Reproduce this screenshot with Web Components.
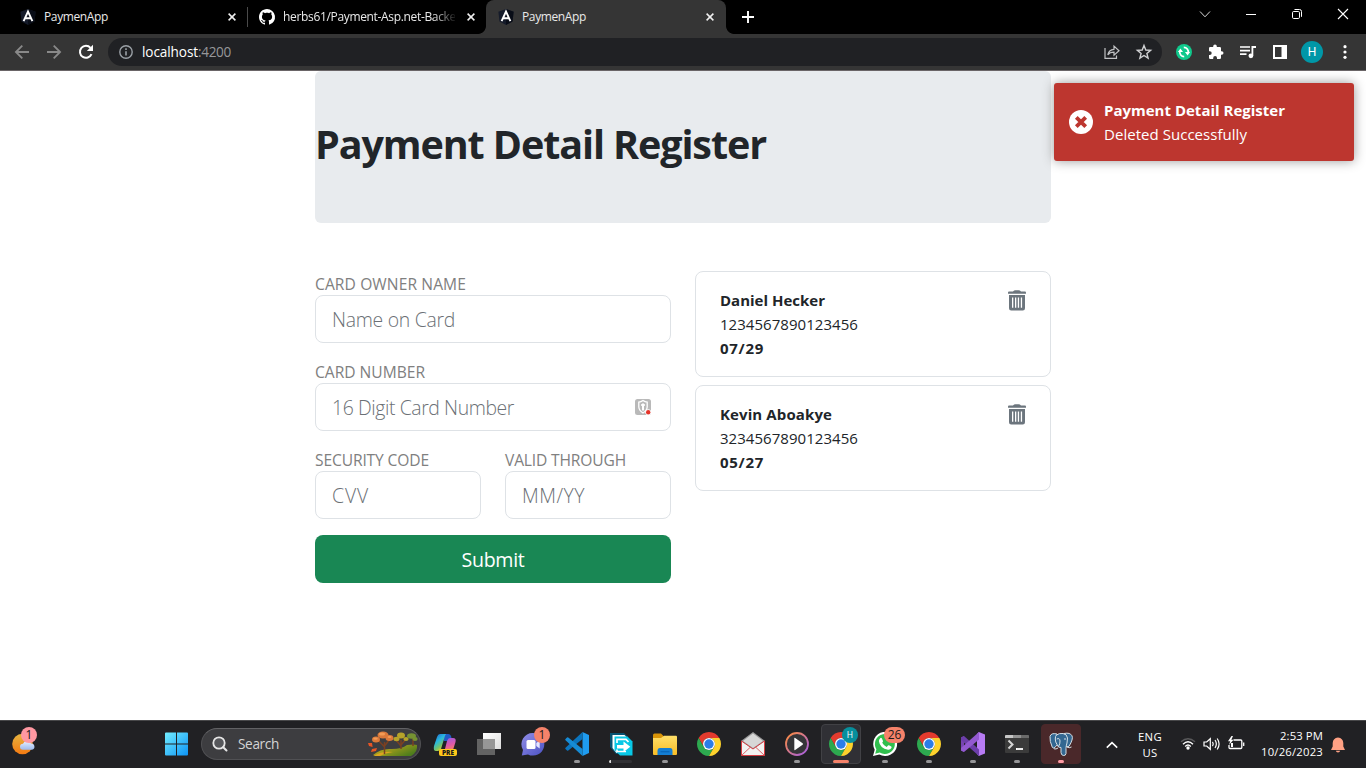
<!DOCTYPE html>
<html lang="en">
<head>
<meta charset="utf-8">
<title>PaymenApp</title>
<style>
html,body{margin:0;height:100%;overflow:hidden}
body{font-family:"Open Sans","Noto Sans",sans-serif;background:#fff;color:#212529}
</style>
</head>
<body>
<desktop-screen></desktop-screen>
<script>
const define=(name,html,setup)=>{
  const t=document.createElement('template');t.innerHTML=html;
  customElements.define(name,class extends HTMLElement{
    constructor(){super();this.attachShadow({mode:'open'}).append(t.content.cloneNode(true));}
    connectedCallback(){if(setup)setup(this,this.shadowRoot);}
  });
};

const chrome=`<path fill="#e33b2e" d="M12 6H22.39A12 12 0 0 0 1.61 6L6.8 15A6 6 0 0 1 12 6Z"/><path fill="#2da94f" d="M6.8 15L1.61 6A12 12 0 0 0 12 24L17.2 15A6 6 0 0 1 6.8 15Z"/><path fill="#fdd22c" d="M17.2 15L12 24A12 12 0 0 0 22.39 6H12A6 6 0 0 1 17.2 15Z"/><circle cx="12" cy="12" r="6" fill="#fff"/><circle cx="12" cy="12" r="4.7" fill="#2a7de9"/>`;
const icons={
angular:[16,16,`<path fill="#151b2a" d="M8 0L15.6 2.7 14.5 12.5 8 16 1.5 12.5 .4 2.7Z"/><path fill="#090d17" d="M8 0L15.6 2.7 14.5 12.5 8 16Z"/><path fill="none" stroke="#fff" stroke-width="1.9" d="M3.6 12.1L8 2.6 12.4 12.1M5.4 9.2H10.6"/>`],
github:[16,16,`<path fill="#fff" d="M8 0C3.58 0 0 3.58 0 8c0 3.54 2.29 6.53 5.47 7.59.4.07.55-.17.55-.38 0-.19-.01-.82-.01-1.49-2.01.37-2.53-.49-2.69-.94-.09-.23-.48-.94-.82-1.13-.28-.15-.68-.52-.01-.53.63-.01 1.08.58 1.23.82.72 1.21 1.87.87 2.33.66.07-.52.28-.87.51-1.07-1.78-.2-3.64-.89-3.64-3.95 0-.87.31-1.59.82-2.15-.08-.2-.36-1.02.08-2.12 0 0 .67-.21 2.2.82.64-.18 1.32-.27 2-.27s1.36.09 2 .27c1.53-1.04 2.2-.82 2.2-.82.44 1.1.16 1.92.08 2.12.51.56.82 1.27.82 2.15 0 3.07-1.87 3.75-3.65 3.95.29.25.54.73.54 1.48 0 1.07-.01 1.93-.01 2.2 0 .21.15.46.55.38A8 8 0 0 0 8 0Z"/>`],
close:[8,8,`<path stroke="#f0f0f0" stroke-width="1.5" d="M.6.6L7.4 7.4M7.4.6L.6 7.4"/>`],
plus:[12,12,`<path stroke="#fff" stroke-width="1.9" d="M6 0V12M0 6H12"/>`],
wchev:[12,12,`<path fill="none" stroke="#d8d8d8" d="M1 3.5L6 8.8 11 3.5"/>`],
wmin:[12,12,`<path stroke="#fff" d="M1 6.5H11"/>`],
wrest:[12,12,`<rect x="1.5" y="3.5" width="7" height="7" rx="1.2" fill="none" stroke="#fff"/><path fill="none" stroke="#fff" d="M3.5 1.5H8.5Q10.5 1.5 10.5 3.5V8.8"/>`],
wclose:[12,12,`<path stroke="#fff" stroke-width="1.1" d="M1 1L11 11M11 1L1 11"/>`],
back:[16,16,`<path fill="none" stroke="#898989" stroke-width="1.8" d="M15 8H2M8.3 1.6L1.9 8 8.3 14.4"/>`],
fwd:[16,16,`<path fill="none" stroke="#898989" stroke-width="1.8" d="M1 8H14M7.7 1.6L14.1 8 7.7 14.4"/>`],
reload:[16,16,`<path fill="none" stroke="#fff" stroke-width="2" d="M13.5 10.2A6 6 0 1 1 12.5 3.9"/><path fill="#fff" d="M15 .8V7H8.8Z"/>`],
info:[14,14,`<circle cx="7" cy="7" r="6.2" fill="none" stroke="#9aa0a6" stroke-width="1.4"/><path stroke="#9aa0a6" stroke-width="1.6" d="M7 6.2V10.5M7 3.3V5"/>`],
share:[16,16,`<path fill="none" stroke="#c2c3c5" stroke-width="1.2" d="M1 4V14.4H12.5V11.5M3.8 10.8C4.5 7 6.8 5.6 10 5.3V2.1L15 6.8 10 11.1V8.2C7.5 8.2 5.3 8.8 3.8 10.8Z"/>`],
star:[16,16,`<path fill="none" stroke="#d0d1d3" stroke-width="1.4" d="M8 1.5L9.8 6 14.6 6.3 10.9 9.4 12.1 14.1 8 11.5 3.9 14.1 5.1 9.4 1.4 6.3 6.2 6Z"/>`],
sync:[16,16,`<circle cx="8" cy="8" r="8" fill="#10c98c"/><path fill="none" stroke="#fff" stroke-width="1.7" d="M8.2 12.6A4.5 4.5 0 0 1 3.8 7.2M7.8 3.4A4.5 4.5 0 0 1 12.2 8.8"/><path fill="#fff" d="M1.9 8L4.4 4.4 7 8ZM14.1 8L11.6 11.6 9 8Z"/>`],
puzzle:[16,16,`<path fill="#fff" d="M1 4.2Q1 3 2.2 3H5.2V2.2A1.8 1.8 0 0 1 8.8 2.2V3H11.8Q13 3 13 4.2V7.2H13.7A1.8 1.8 0 0 1 13.7 10.8H13V13.8Q13 15 11.8 15H9V14A1.9 1.9 0 0 0 5.2 14V15H2.2Q1 15 1 13.8V11H1.8A1.9 1.9 0 0 0 1.8 7.2H1Z"/>`],
queue:[16,16,`<path stroke="#fff" stroke-width="1.7" d="M0 3H10M0 6.6H10M0 10.2H6.5"/><path fill="none" stroke="#fff" stroke-width="1.8" d="M12.4 11.5V3H16"/><circle cx="10.9" cy="11.8" r="2.4" fill="#fff"/>`],
panel:[14,14,`<path fill="#fff" fill-rule="evenodd" d="M0 0H14V14H0ZM2 2V12H8.5V2Z"/>`],
dots:[4,14,`<g fill="#fff"><circle cx="2" cy="1.7" r="1.6"/><circle cx="2" cy="7" r="1.6"/><circle cx="2" cy="12.3" r="1.6"/></g>`],
trash:[18,21,`<path fill="#6c757d" fill-rule="evenodd" d="M1 1.6H5Q6 .2 7.4.2H10.6Q12 .2 13 1.6H17Q18 1.6 18 2.8V3.8H0V2.8Q0 1.6 1 1.6ZM1 5H17V18.3Q17 20.6 14.8 20.6H3.2Q1 20.6 1 18.3ZM4 7.6V17.8H5.3V7.6ZM7 7.6V17.8H8.3V7.6ZM9.8 7.6V17.8H11.1V7.6ZM12.8 7.6V17.8H14.1V7.6Z"/>`],
toastx:[24,24,`<circle cx="12" cy="12" r="12" fill="#fff"/><path stroke="#bd362f" stroke-width="3.8" d="M7.3 7.3L16.7 16.7M16.7 7.3L7.3 16.7"/>`],
key:[16,16,`<rect width="16" height="16" rx="2.5" fill="#b9b9b9"/><path fill="none" stroke="#fff" stroke-width="1.3" d="M8 1.5Q10 3 12.2 3.2V8Q12 11.5 8 14Q4 11.5 3.8 8V3.2Q6 3 8 1.5Z"/><path stroke="#fff" stroke-width="2" d="M8 4.5V11.5M6.2 6H9.8"/><circle cx="13.2" cy="13.2" r="2.9" fill="#fff"/><circle cx="13.2" cy="13.2" r="2.2" fill="#e53429"/>`],
weather:[24,24,`<defs><linearGradient id="s" x2="0" y2="1"><stop stop-color="#e6b440"/><stop offset="1" stop-color="#f47a12"/></linearGradient><linearGradient id="c" x2="0" y2="1"><stop stop-color="#e8f1ff"/><stop offset="1" stop-color="#9db9ec"/></linearGradient></defs><circle cx="10.5" cy="12" r="10.3" fill="url(#s)"/><path fill="url(#c)" d="M11 17.8A3 3 0 0 1 11 11.8 4.3 4.3 0 0 1 19 11.5 3.2 3.2 0 0 1 20 17.8Z"/>`],
windows:[24,24,`<defs><linearGradient id="w" x2="1" y2="1"><stop stop-color="#72edff"/><stop offset="1" stop-color="#0d93f5"/></linearGradient></defs><path fill="url(#w)" d="M0 1Q0 0 1 0H11V11H0ZM12 0H22Q23 0 23 1V11H12ZM0 12H11V23H1Q0 23 0 22ZM12 12H23V22Q23 23 22 23H12Z" transform="translate(0 .5)"/>`],
search:[16,16,`<circle cx="7" cy="7" r="5.7" fill="#56575b" stroke="#e6e6e6" stroke-width="1.8"/><path stroke="#e6e6e6" stroke-width="2" stroke-linecap="round" d="M11.2 11.2L14.5 14.5"/>`],
trees:[50,26,`<defs><linearGradient id="h" x2="1" y2=".6"><stop stop-color="#e0b51c"/><stop offset="1" stop-color="#4e7d1c"/></linearGradient></defs><path fill="url(#h)" d="M5 24Q13 17 24 18 34 18 39 14 46 13 49 14 50 21 43 25H7Z"/><path fill="#dba520" d="M6 25Q13 20 25 21 17 22 12 25Z"/><path fill="none" stroke="#7a4021" stroke-width="1.5" d="M16.5 23V11M16.5 16L10 9M16.5 15L22 8M33 18V9M33 15L28 9M33 14L38 8M45 15V7"/><g fill="#db793a"><ellipse cx="8" cy="8.5" rx="4" ry="3"/><ellipse cx="15" cy="4" rx="5.5" ry="3.6"/><ellipse cx="21.5" cy="7" rx="4" ry="3"/></g><g fill="#f39b55"><ellipse cx="7.5" cy="7.6" rx="2.3" ry="1.2"/><ellipse cx="14" cy="3" rx="3" ry="1.5"/><ellipse cx="21.5" cy="6" rx="2" ry="1"/></g><g fill="#b6a329"><ellipse cx="28.5" cy="8" rx="3" ry="2.2"/><ellipse cx="33" cy="4.5" rx="4" ry="3"/><ellipse cx="38" cy="8" rx="2.6" ry="2"/></g><g fill="#769232"><ellipse cx="43.5" cy="5" rx="4.5" ry="2.8"/><ellipse cx="47" cy="8" rx="2.6" ry="2"/></g><path fill="#e85525" d="M0 12L4 12 4.6 16 1 15ZM4 18L9 17 8 20 3 21Z"/>`],
copilot:[24,24,`<defs><linearGradient id="cp1" x2=".6" y2="1"><stop stop-color="#225bce"/><stop offset=".45" stop-color="#28b9df"/><stop offset=".75" stop-color="#72c46b"/><stop offset="1" stop-color="#f4ce21"/></linearGradient><linearGradient id="cp2" x2=".3" y2="1"><stop stop-color="#9259ee"/><stop offset=".6" stop-color="#e15aa4"/><stop offset="1" stop-color="#fb8b52"/></linearGradient></defs><path fill="#205bc5" d="M7 2H15Q18 2 18.5 6L17 9H11Z"/><path fill="url(#cp1)" d="M7 2H13Q12 3 11 7L8 17Q7 19 3 19 0 19 1 14L4 5Q5 2 7 2Z"/><path fill="url(#cp2)" d="M17 6H20Q23.5 6 22.5 10L20 18 8 21Q11 20 12 17L14 9Q15 6 17 6Z"/>`],
taskview:[24,24,`<defs><linearGradient id="tv" x2="1" y2="1"><stop stop-color="#fff"/><stop offset="1" stop-color="#dcdcdc"/></linearGradient></defs><rect x="6" y="1" width="18" height="16" fill="url(#tv)"/><path fill="#636363" d="M0 7H18V23H0Z"/><path fill="#969696" d="M6 7H18V17H6Z"/>`],
chat:[24,24,`<defs><linearGradient id="ch" x2="1" y2="1"><stop stop-color="#928ee8"/><stop offset="1" stop-color="#4a51c3"/></linearGradient></defs><path fill="url(#ch)" d="M12 1A11.3 11.3 0 1 1 7 22.4L.8 23.5 2 18A11.3 11.3 0 0 1 12 1Z"/><rect x="5.5" y="8" width="9" height="9" rx="1.5" fill="#fff"/><path fill="#e4e4ff" d="M15.3 11L18.7 8.5V16.5L15.3 14Z"/>`],
vscode:[24,24,`<path fill="#1f9cf0" d="M17.5 0L24 3V21L17.5 24Z"/><path fill="#0b74bd" d="M17.5 0V7L3.3 18.5Q2.7 19 2 18.5L.5 17.1Q-.2 16.4.5 15.7Z"/><path fill="#168bd5" d="M17.5 24V17L3.3 5.5Q2.7 5 2 5.5L.5 6.9Q-.2 7.6.5 8.3Z"/>`],
share2:[24,24,`<path fill="#075271" d="M1 1H15L19 5V22H7L1 15Z"/><path fill="#fff" d="M3.5 3H15.5L19.5 7V21H7.5L3.5 16Z"/><path fill="#08c8e6" d="M5.5 4.5H18.5L23.5 9.5V23.5H11L5.5 18Z"/><path fill="none" stroke="#fff" stroke-width="1.7" d="M8 11V7.3H17L19.5 10M8 17.5V19.5H17"/><path fill="#fff" d="M8 13H14.5V9.6L21.3 14.8 14.5 20V16.5H8Z"/>`],
folder:[24,24,`<defs><linearGradient id="fd" x2="0" y2="1"><stop stop-color="#ffdf69"/><stop offset="1" stop-color="#f8bc25"/></linearGradient></defs><path fill="#d99407" d="M0 3.2Q0 1.5 1.5 1.5H8L10.5 4V8H0Z"/><path fill="url(#fd)" d="M0 6H8L11 3.8H23Q24 3.8 24 5V22Q24 23 23 23H1Q0 23 0 22Z"/><path fill="#147ed3" d="M4.5 23V19Q4.5 16 7 16H17Q19.5 16 19.5 19V23Z"/><path fill="#0867ba" d="M7.5 19H16.5V20.4H7.5Z"/>`],
chrome:[24,24,chrome],
mail:[24,24,`<path fill="#999" d="M0 9L12 0 24 9 12 19Z"/><path fill="#d7d7d7" d="M2 9L12 1.5 22 9 12 16Z"/><path fill="#f2f2f2" stroke="#d33c42" d="M.5 9L12 17 23.5 9V23.5H.5Z"/><path fill="#fafafa" stroke="#d33c42" stroke-width=".8" d="M.5 23.5L9 15.5M23.5 23.5L15 15.5"/>`],
player:[24,24,`<defs><linearGradient id="pl" x2="1" y2="1"><stop stop-color="#ff8d3a"/><stop offset="1" stop-color="#a35de8"/></linearGradient></defs><circle cx="12" cy="12" r="11" fill="#353538" stroke="url(#pl)" stroke-width="1.8"/><path fill="#fff" d="M9.3 6.5Q9.3 5.5 10.2 6L17.6 11.2Q18.4 12 17.6 12.8L10.2 18Q9.3 18.5 9.3 17.5Z"/>`],
whatsapp:[24,24,`<path fill="#fff" d="M0 24L1.7 17.8A12 12 0 1 1 6.3 22.4Z"/><path fill="#31bf4e" d="M2.2 21.8L3.4 17.3A10 10 0 1 1 6.8 20.6Z"/><path fill="#fff" d="M7.2 6.2Q8 5.5 8.8 6.2L10 9Q10.2 9.7 9.2 10.8 10.8 13.8 13.7 14.9L15 13.4Q15.5 13 16 13.3L18.2 14.4Q18.9 14.8 18.4 16 17.4 18 15 17.8 7 16.5 5.9 9.3 5.8 7.5 7.2 6.2Z"/>`],
vs:[24,24,`<path fill="#b77bf4" d="M17.8 0L24 2.5V21.5L17.8 24 16 22V2Z"/><path fill="#7744b2" d="M0 5.5L3 4V20L0 18.5Z"/><path fill="#6d3eaa" d="M3 4L18 17.5V24L0 8V5.5Z"/><path fill="#9359d0" d="M18 0V7.5L3 20 0 18.5V16Z"/>`],
terminal:[24,24,`<rect y="3" width="24" height="18" rx="1" fill="#3b3b3b"/><path fill="#c6c6c6" d="M1 3H8V6H0V4Q0 3 1 3Z"/><path fill="#929292" d="M8 3H16V6H8Z"/><path fill="#6b6b6b" d="M16 3H23Q24 3 24 4V6H16Z"/><path fill="none" stroke="#d5d5d5" stroke-width="2" d="M3.5 8.5L7.5 12.5 3.5 16.5"/><path stroke="#fff" stroke-width="1.8" d="M11 17H18"/>`],
postgres:[24,24,`<g fill="#336791" stroke="#d5e0e7" stroke-width="1"><path d="M8 2Q2 .5 1 4.5 .5 9 3.3 15.3 4.7 17.5 6.8 14.5L9 12Z"/><path d="M15 1.5Q21 .2 23 3.8 24.5 7 20 14.3 18 16 15.7 13Z"/><path d="M7.5 3Q10 1 14 1.5 18 2 18.5 6L18 11Q17 14 17 16.5V21.5Q16.8 23.8 14.3 23.5 12.2 23.2 12 20.5V15.5Q9 16 8.2 12.8Q6.2 10 6.3 7 6.2 4 7.5 3Z"/></g><path fill="none" stroke="#d5e0e7" d="M7.8 7Q10.8 5.6 11 9 11.2 12 9.5 14.5M15 7H17M18 15Q20 16.5 22.5 15M9 16Q7 17.5 5 16.8"/>`],
chevup:[12,12,`<path fill="none" stroke="#fff" stroke-width="1.6" d="M.8 8.7L6 3.7 11.2 8.7"/>`],
wifi:[16,14,`<path fill="none" stroke="#59595b" stroke-width="1.4" d="M1 4.8Q8-1.3 15 4.8"/><path fill="none" stroke="#fff" stroke-width="1.4" d="M3 7.2Q8 2.5 13 7.2M5.2 9.4Q8 6.8 10.8 9.4"/><circle cx="8" cy="11" r="1.7" fill="#fff"/>`],
volume:[18,14,`<path fill="none" stroke="#fff" stroke-width="1.2" d="M1 5H3.7L7.3 1.7V12.3L3.7 9H1ZM9.5 4.8Q11 7 9.5 9.2M12 3Q14.7 7 12 11M14.2 1.5Q18 7 14.2 12.5"/>`],
battery:[18,16,`<path fill="none" stroke="#fff" stroke-width="1.3" d="M6.5 4H13.8Q14.8 4 14.8 5V11.5Q14.8 12.5 13.8 12.5H3Q2 12.5 2 11.5V9M16.7 6.5V10"/><path fill="#fff" d="M4.5 0L1 5.3H3.2L2 9 6.5 3.7H4.3L6 0ZM4 7H6V11H4Z"/>`],
bell:[14,16,`<path fill="#ffa184" d="M7 .5Q12 1 12.3 6V9.5L14 13H0L1.7 9.5V6Q2 1 7 .5ZM4.8 13.8H9.2Q8.7 15.5 7 15.5 5.3 15.5 4.8 13.8Z"/>`]
};
define('ui-icon',`<style>:host{display:inline-flex;flex:none}svg{display:block;overflow:visible}</style>`,(el,root)=>{
  const [w,h,body]=icons[el.getAttribute('name')];
  root.innerHTML+=`<svg width="${w}" height="${h}" viewBox="0 0 ${w} ${h}" aria-hidden="true">${body}</svg>`;
});

define('browser-tab',`<style>
:host{display:flex;box-sizing:border-box;width:239px;height:34px;align-items:center;padding:0 11px 0 12px;position:relative;font-size:12px;color:#e9e9e9}
:host([active]){width:240px;background:#353535;border-radius:8px 8px 0 0;padding-right:12px}
:host([active])::before,:host([active])::after{content:"";position:absolute;bottom:0;width:8px;height:8px}
:host([active])::before{left:-8px;background:radial-gradient(circle at 0 0,transparent 7.5px,#353535 8.3px)}
:host([active])::after{right:-8px;background:radial-gradient(circle at 100% 0,transparent 7.5px,#353535 8.3px)}
:host([divided])::after{content:"";position:absolute;right:-1px;top:7px;height:20px;width:1px;background:#4a4a4a}
.t{flex:1;min-width:0;margin:0 12px 0 8px;overflow:hidden;line-height:20px;white-space:nowrap}
:host([long]) .t{-webkit-mask-image:linear-gradient(90deg,#000 150px,transparent 174px);mask-image:linear-gradient(90deg,#000 150px,transparent 174px)}
</style><slot name="icon"></slot><div class="t"><slot></slot></div><ui-icon name="close"></ui-icon>`);

define('browser-tabs',`<style>
:host{display:flex;height:34px;background:#000;padding-left:8px;box-sizing:border-box}
.new{width:44px;display:flex;align-items:center;justify-content:center}
.win{margin-left:auto;display:flex;height:28px}.win span{width:46px;display:flex;align-items:center;justify-content:center}
</style>
<browser-tab divided><ui-icon slot="icon" name="angular"></ui-icon><fit-text w="64">PaymenApp</fit-text></browser-tab>
<browser-tab long style="padding-left:12px"><ui-icon slot="icon" name="github"></ui-icon><fit-text w="180">herbs61/Payment-Asp.net-Backen</fit-text></browser-tab>
<browser-tab active><ui-icon slot="icon" name="angular"></ui-icon><fit-text w="64">PaymenApp</fit-text></browser-tab>
<div class="new"><ui-icon name="plus"></ui-icon></div>
<div class="win"><span><ui-icon name="wchev"></ui-icon></span><span><ui-icon name="wmin"></ui-icon></span><span><ui-icon name="wrest"></ui-icon></span><span><ui-icon name="wclose"></ui-icon></span></div>`);

define('browser-toolbar',`<style>
:host{display:flex;height:37px;box-sizing:border-box;background:#353535;border-bottom:1px solid #6a6567;align-items:center;padding:0 6px}
.b{width:32px;display:flex;justify-content:center;align-items:center}
.omni{flex:1;margin-left:6px;height:28px;border-radius:14px;background:#202124;display:flex;align-items:center;padding:0 2px 0 11px;font-size:13.6px;color:#fff}
.url{margin-left:9px;flex:1;display:flex;line-height:28px}.port{color:#969799}
.ext{display:flex;margin-left:6px}
.av{width:22px;height:22px;border-radius:50%;background:#0097a7;color:#fff;font:12px/22px Roboto,sans-serif;text-align:center}
</style>
<span class="b"><ui-icon name="back"></ui-icon></span><span class="b"><ui-icon name="fwd"></ui-icon></span><span class="b"><ui-icon name="reload"></ui-icon></span>
<div class="omni"><ui-icon name="info"></ui-icon><div class="url"><fit-text w="56">localhost</fit-text><fit-text class="port" w="33">:4200</fit-text></div><span class="b"><ui-icon name="share"></ui-icon></span><span class="b"><ui-icon name="star"></ui-icon></span></div>
<div class="ext"><span class="b"><ui-icon name="sync"></ui-icon></span><span class="b"><ui-icon name="puzzle"></ui-icon></span><span class="b"><ui-icon name="queue"></ui-icon></span><span class="b"><ui-icon name="panel"></ui-icon></span><span class="b"><span class="av">H</span></span><span class="b"><ui-icon name="dots" style="margin-left:1px"></ui-icon></span></div>`);

define('form-field',`<style>
:host{display:block}
label{display:block;height:24px;line-height:26px;font-size:15.6px;color:#808080}
.box{height:48px;box-sizing:border-box;border:1px solid #dee2e6;border-radius:8px;padding:0 19px 0 16px;display:flex;align-items:center;justify-content:space-between;font-size:19.4px;font-weight:300;line-height:47px;color:#6b7075}
</style><label><slot name="label"></slot></label><div class="box"><slot></slot><slot name="tool"></slot></div>`);

define('payment-card',`<style>
:host{display:flex;justify-content:space-between;box-sizing:border-box;height:106px;border:1px solid #dee2e6;border-radius:8px;padding:16px 24px;font-size:15px;line-height:24px}
.col{display:flex;flex-direction:column}ui-icon{margin:2px 0 0}::slotted([slot=name]),::slotted([slot=date]){font-weight:700}
</style><div class="col"><slot name="name"></slot><slot name="number"></slot><slot name="date"></slot></div><ui-icon name="trash"></ui-icon>`);

define('toast-message',`<style>
:host{display:flex;position:absolute;top:12px;right:12px;width:300px;height:78px;box-sizing:border-box;padding:15px;background:#bd362f;border-radius:3px;box-shadow:0 0 12px #999;color:#fff;font-size:15px;line-height:24px;align-items:center}
.c{margin-left:11px;display:flex;flex-direction:column}b{display:block;height:24px}
</style><ui-icon name="toastx"></ui-icon><div class="c"><b><fit-text w="181">Payment Detail Register</fit-text></b><fit-text w="143">Deleted Successfully</fit-text></div>`);

define('payment-page',`<style>
:host{display:block;flex:1;position:relative;background:#fff}
main{width:736px;margin:0 auto}
header{height:152px;background:#e8ebee;border-radius:6px;display:flex;align-items:center}
h1{margin:0 0 6px;font:700 39.5px/48px "Open Sans","Noto Sans",sans-serif}
.cols{display:grid;grid-template-columns:1fr 1fr;gap:24px;margin-top:48px}
form{display:flex;flex-direction:column;gap:16px}.two{display:grid;grid-template-columns:1fr 1fr;gap:24px}
button{height:48px;border:0;border-radius:8px;background:#198754;color:#fff;font:19.6px/46px "Open Sans","Noto Sans",sans-serif;padding:2px 0 0}
.list{display:flex;flex-direction:column;gap:8px}
</style><main><header><h1><fit-text w="451">Payment Detail Register</fit-text></h1></header><div class="cols">
<form>
<form-field><fit-text slot="label" w="151">CARD OWNER NAME</fit-text><fit-text w="123">Name on Card</fit-text></form-field>
<form-field><fit-text slot="label" w="110">CARD NUMBER</fit-text><fit-text w="182">16 Digit Card Number</fit-text><ui-icon slot="tool" name="key"></ui-icon></form-field>
<div class="two"><form-field><fit-text slot="label" w="114">SECURITY CODE</fit-text><fit-text w="37">CVV</fit-text></form-field><form-field><fit-text slot="label" w="121">VALID THROUGH</fit-text><fit-text w="63">MM/YY</fit-text></form-field></div>
<button type="button"><fit-text w="63">Submit</fit-text></button>
</form>
<div class="list">
<payment-card><fit-text slot="name" w="105">Daniel Hecker</fit-text><fit-text slot="number" w="138">1234567890123456</fit-text><fit-text slot="date" w="44">07/29</fit-text></payment-card>
<payment-card><fit-text slot="name" w="112">Kevin Aboakye</fit-text><fit-text slot="number" w="138">3234567890123456</fit-text><fit-text slot="date" w="44">05/27</fit-text></payment-card>
</div></div></main><toast-message></toast-message>`);

define('task-item',`<style>
:host{display:flex;width:44px;height:47px;flex:none;align-items:center;justify-content:center;position:relative;box-sizing:border-box;padding-bottom:1px}
:host([focused])::before,:host([alert])::before{content:"";position:absolute;left:2px;top:3px;width:38px;height:38px;border:1px solid #414145;border-radius:4px;background:#303035}
:host([alert])::before{background:#4a282a;border-color:#4a282a}
:host([focused])::after,:host([running])::after,:host([loading])::after{content:"";position:absolute;bottom:5px;left:19px;width:6px;height:3px;border-radius:2px;background:#959598}
:host([focused])::after{left:14px;width:16px;background:#f5826a}
:host([alert])::after{background:#ff9ca6!important}
:host([loading])::after{left:10px;width:23px;background:linear-gradient(90deg,#ddd 2px,#303034 2px)}
.i{position:relative;display:flex}
::slotted(*){position:absolute;z-index:1;box-sizing:border-box;text-align:center;color:#1b1b1b;background:#f5826a;border-radius:8px;height:16px;font-size:12px;line-height:16px}
</style><span class="i"></span><slot></slot>`,(el,r)=>{
  const i=document.createElement('ui-icon');i.setAttribute('name',el.getAttribute('icon'));r.querySelector('.i').replaceChildren(i);
});

define('search-pill',`<style>
:host{display:flex;width:220px;height:32px;box-sizing:border-box;border:1px solid #505053;border-top-color:#626265;border-radius:16px;background:#3d3d40;align-items:center;padding:0 2px 0 10px;font-size:13.6px;line-height:18px;color:#d4d4d4;margin-bottom:1px}
fit-text{margin:0 0 1px 10px;flex:1}ui-icon{margin-bottom:1px}
</style><ui-icon name="search"></ui-icon><fit-text w="41">Search</fit-text><ui-icon name="trees"></ui-icon>`);

define('task-bar',`<style>
:host{display:flex;height:48px;box-sizing:border-box;background:#212124;border-top:1px solid #48484a;color:#fff;align-items:center;font-size:11.3px}
.apps{display:flex;margin-left:2px}
.tray{display:flex;align-items:center;margin-left:23px;flex:1}
.lang,.time{display:flex;flex-direction:column;line-height:16px}.lang{align-items:center;width:26px;margin-left:19px;margin-top:1px}
.time{align-items:flex-end;margin-left:auto;margin-top:-1px}
.net{display:flex;gap:6px;align-items:center;margin:0 0 1px 17px}
</style>
<task-item icon="weather" style="width:48px"><span style="left:21px;top:6px;width:16px;background:#ff98a2">1</span></task-item>
<task-item icon="windows" style="margin-left:107px"></task-item>
<search-pill style="margin-left:2px"></search-pill>
<div class="apps">
<task-item icon="copilot"><span style="left:16px;top:28px;width:18px;height:7px;line-height:7px;font-size:6.5px;font-weight:800;background:#ffc91b;border-radius:2px">PRE</span></task-item>
<task-item icon="taskview"></task-item>
<task-item icon="chat"><span style="left:23px;top:6px;width:16px">1</span></task-item>
<task-item icon="vscode" running></task-item>
<task-item icon="share2" loading></task-item>
<task-item icon="folder" running></task-item>
<task-item icon="chrome"></task-item>
<task-item icon="mail"></task-item>
<task-item icon="player" running></task-item>
<task-item icon="chrome" focused><span style="left:23px;top:6px;width:16px;background:#078f9c;color:#fff;font-size:8.5px">H</span></task-item>
<task-item icon="whatsapp" running><span style="left:21px;top:6px;width:21px">26</span></task-item>
<task-item icon="chrome" running></task-item>
<task-item icon="vs" running></task-item>
<task-item icon="terminal" running></task-item>
<task-item icon="postgres" running alert></task-item>
</div>
<div class="tray"><ui-icon name="chevup"></ui-icon><div class="lang"><fit-text w="24">ENG</fit-text><fit-text w="15">US</fit-text></div><div class="net"><ui-icon name="wifi"></ui-icon><ui-icon name="volume" style="margin-left:1px"></ui-icon><ui-icon name="battery"></ui-icon></div><div class="time"><fit-text w="43">2:53 PM</fit-text><fit-text w="62">10/26/2023</fit-text></div><ui-icon name="bell" style="margin:0 21px 0 8px"></ui-icon></div>`);

define('desktop-screen',`<style>:host{display:flex;flex-direction:column;width:1366px;height:768px}</style>
<browser-tabs></browser-tabs><browser-toolbar></browser-toolbar><payment-page></payment-page><task-bar></task-bar>`);

/* Tracks a single line of text so that it spans the width given in "w". */
define('fit-text',`<style>:host{display:block;white-space:nowrap}span{display:inline-block}</style><span><slot></slot></span>`,(el,r)=>{
  const s=r.querySelector('span'),n=el.textContent.length;
  s.style.letterSpacing=((+el.getAttribute('w')-s.getBoundingClientRect().width)/n)+'px';
});
</script>
</body>
</html>
